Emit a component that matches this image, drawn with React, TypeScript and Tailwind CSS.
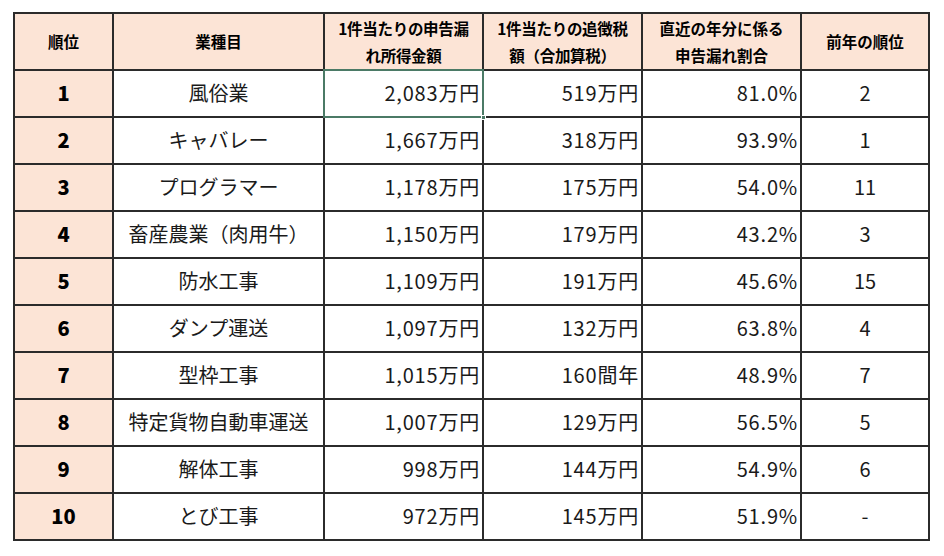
const rows = [
  { rank: '1', name: '風俗業', income: '2,083万円', tax: '519万円', rate: '81.0%', prev: '2' },
  { rank: '2', name: 'キャバレー', income: '1,667万円', tax: '318万円', rate: '93.9%', prev: '1' },
  { rank: '3', name: 'プログラマー', income: '1,178万円', tax: '175万円', rate: '54.0%', prev: '11' },
  { rank: '4', name: '畜産農業（肉用牛）', income: '1,150万円', tax: '179万円', rate: '43.2%', prev: '3' },
  { rank: '5', name: '防水工事', income: '1,109万円', tax: '191万円', rate: '45.6%', prev: '15' },
  { rank: '6', name: 'ダンプ運送', income: '1,097万円', tax: '132万円', rate: '63.8%', prev: '4' },
  { rank: '7', name: '型枠工事', income: '1,015万円', tax: '160間年', rate: '48.9%', prev: '7' },
  { rank: '8', name: '特定貨物自動車運送', income: '1,007万円', tax: '129万円', rate: '56.5%', prev: '5' },
  { rank: '9', name: '解体工事', income: '998万円', tax: '144万円', rate: '54.9%', prev: '6' },
  { rank: '10', name: 'とび工事', income: '972万円', tax: '145万円', rate: '51.9%', prev: '-' },
];

const font = { fontFamily: '"Noto Sans CJK JP", "Noto Sans", sans-serif' };

export default function App() {
  return (
    <div className="w-[944px] h-[556px] bg-white pl-[13px] pt-[12px]" style={font}>
      <table className="table-fixed border-collapse border-2 border-[#2b2b2b] text-[#1a1a1a]">
        <colgroup>
          <col className="w-[99px]" />
          <col className="w-[211px]" />
          <col className="w-[159px]" />
          <col className="w-[159px]" />
          <col className="w-[159px]" />
          <col className="w-[128px]" />
        </colgroup>
        <thead>
          <tr className="h-[57px] bg-[#fce4d6] text-[15.5px] font-bold leading-[27px] text-black">
            <th className="border-2 border-[#2b2b2b]">順位</th>
            <th className="border-2 border-[#2b2b2b]">業種目</th>
            <th className="border-2 border-[#2b2b2b] px-0 tracking-[-0.3px]">1件当たりの申告漏<br />れ所得金額</th>
            <th className="border-2 border-[#2b2b2b] px-0 tracking-[-0.3px]">1件当たりの追徴税<br />額（合加算税）</th>
            <th className="border-2 border-[#2b2b2b] px-0">直近の年分に係る<br />申告漏れ割合</th>
            <th className="border-2 border-[#2b2b2b]">前年の順位</th>
          </tr>
        </thead>
        <tbody>
          {rows.map((r, i) => (
            <tr key={r.rank} className="h-[47px] text-[20px] font-normal leading-[24px]">
              <td className="border-2 border-[#2b2b2b] bg-[#fce4d6] text-center font-black text-black pb-[2px]">{r.rank}</td>
              <td className="border-2 border-[#2b2b2b] text-center pb-[2px]">{r.name}</td>
              <td className="relative border-2 border-[#2b2b2b] text-right pr-[2px] pb-[2px] tracking-[0.8px]">
                {r.income}
                {i === 0 && (
                  <div className="absolute -inset-[2px] border-2 border-[#4b7a66]">
                    <div className="absolute -right-[4px] -bottom-[4px] w-[5px] h-[5px] bg-[#4b7a66] border border-white" />
                  </div>
                )}
              </td>
              <td className="border-2 border-[#2b2b2b] text-right pr-[2px] pb-[2px] tracking-[0.8px]">{r.tax}</td>
              <td className="border-2 border-[#2b2b2b] text-right pr-[2px] pb-[2px] tracking-[0.8px]">{r.rate}</td>
              <td className="border-2 border-[#2b2b2b] text-center pb-[2px]">{r.prev}</td>
            </tr>
          ))}
        </tbody>
      </table>
    </div>
  );
}
